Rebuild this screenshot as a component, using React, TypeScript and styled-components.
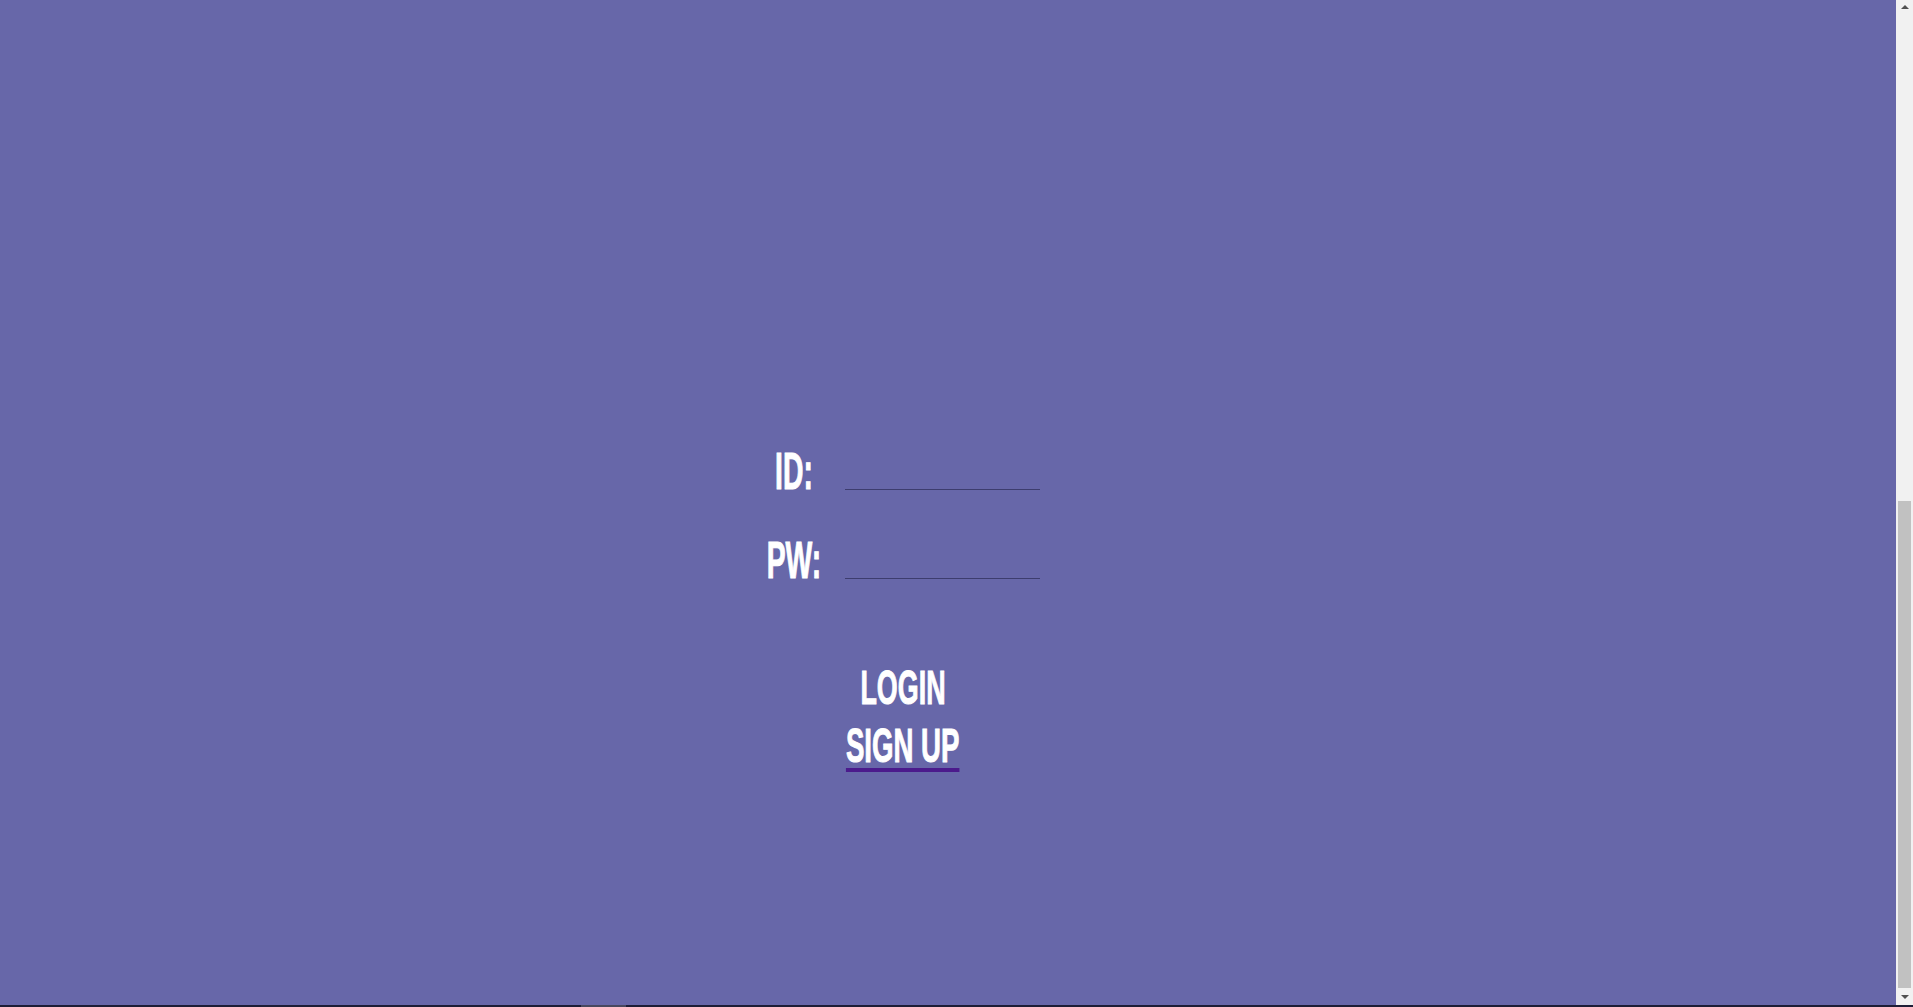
import React from "react";
import styled, { createGlobalStyle } from "styled-components";

const GlobalStyle = createGlobalStyle`
  html, body {
    margin: 0;
    padding: 0;
    background: #6767a9;
    overflow: hidden;
  }
  body {
    font-family: "Liberation Sans", Arial, sans-serif;
  }
`;

const Screen = styled.div`
  height: 100vh;
  display: flex;
  flex-direction: column;
`;

const Window = styled.div`
  flex: 1;
  display: flex;
  min-height: 0;
`;

const Main = styled.main`
  flex: 1;
  display: flex;
  flex-direction: column;
  align-items: center;
  padding-top: 445px;
  padding-right: 97px;
`;

const Form = styled.form`
  display: grid;
  grid-template-columns: 70px 195px;
  column-gap: 16px;
  row-gap: 37px;
  align-items: end;
  margin: 0;
`;

const Label = styled.label`
  display: flex;
  justify-content: center;
  white-space: nowrap;
  color: #ffffff;
  font-weight: 700;
  font-size: 52px;
  line-height: 1;
  -webkit-text-stroke: 1px #ffffff;
  transform: scaleX(0.545);
  transform-origin: center;
`;

const Input = styled.input`
  box-sizing: border-box;
  width: 195px;
  height: 30px;
  margin: 0 0 7px 0;
  padding: 0 4px;
  background: transparent;
  border: 0;
  border-bottom: 1px solid #3d3d6e;
  color: #ffffff;
  font-family: inherit;
  font-size: 20px;
  outline: none;
`;

const Actions = styled.nav`
  display: flex;
  flex-direction: column;
  align-items: center;
  margin-top: 73px;
  padding-left: 7px;
`;

const ActionLink = styled.a<{ $underline?: boolean }>`
  display: block;
  white-space: nowrap;
  color: #ffffff;
  font-weight: 700;
  font-size: 48px;
  line-height: 58px;
  -webkit-text-stroke: 1px #ffffff;
  transform: scaleX(${(p) => (p.$underline ? 0.575 : 0.56)});
  text-decoration: ${(p) => (p.$underline ? "underline" : "none")};
  text-decoration-color: #4b1a8c;
  text-decoration-thickness: 4px;
  text-underline-offset: 6px;
  cursor: pointer;
`;

const Scrollbar = styled.div`
  width: 17px;
  background: #f1f1f1;
  display: flex;
  flex-direction: column;
`;

const ArrowButton = styled.div<{ $down?: boolean }>`
  height: 17px;
  display: flex;
  align-items: center;
  justify-content: center;
  &::before {
    content: "";
    width: 0;
    height: 0;
    border-left: 4px solid transparent;
    border-right: 4px solid transparent;
    ${(p) =>
      p.$down
        ? "border-top: 4px solid #505050;"
        : "border-bottom: 4px solid #505050; margin-top: -3px;"}
  }
`;

const Track = styled.div`
  flex: 1;
  display: flex;
  flex-direction: column;
`;

const Thumb = styled.div`
  flex: 1;
  margin: 484px 2px 0 2px;
  background: #c1c1c1;
`;

const BottomLine = styled.div`
  height: 2px;
  background: #1d1d36;
  display: flex;
`;

const LineHandle = styled.span`
  margin-left: 581px;
  width: 45px;
  background: #48485f;
`;

export default function App() {
  return (
    <>
      <GlobalStyle />
      <Screen>
        <Window>
          <Main>
            <Form onSubmit={(e) => e.preventDefault()}>
              <Label htmlFor="id">ID:</Label>
              <Input id="id" type="text" />
              <Label htmlFor="pw">PW:</Label>
              <Input id="pw" type="password" />
            </Form>
            <Actions>
              <ActionLink>LOGIN</ActionLink>
              <ActionLink $underline>SIGN UP</ActionLink>
            </Actions>
          </Main>
          <Scrollbar>
            <ArrowButton />
            <Track>
              <Thumb />
            </Track>
            <ArrowButton $down />
          </Scrollbar>
        </Window>
        <BottomLine>
          <LineHandle />
        </BottomLine>
      </Screen>
    </>
  );
}
